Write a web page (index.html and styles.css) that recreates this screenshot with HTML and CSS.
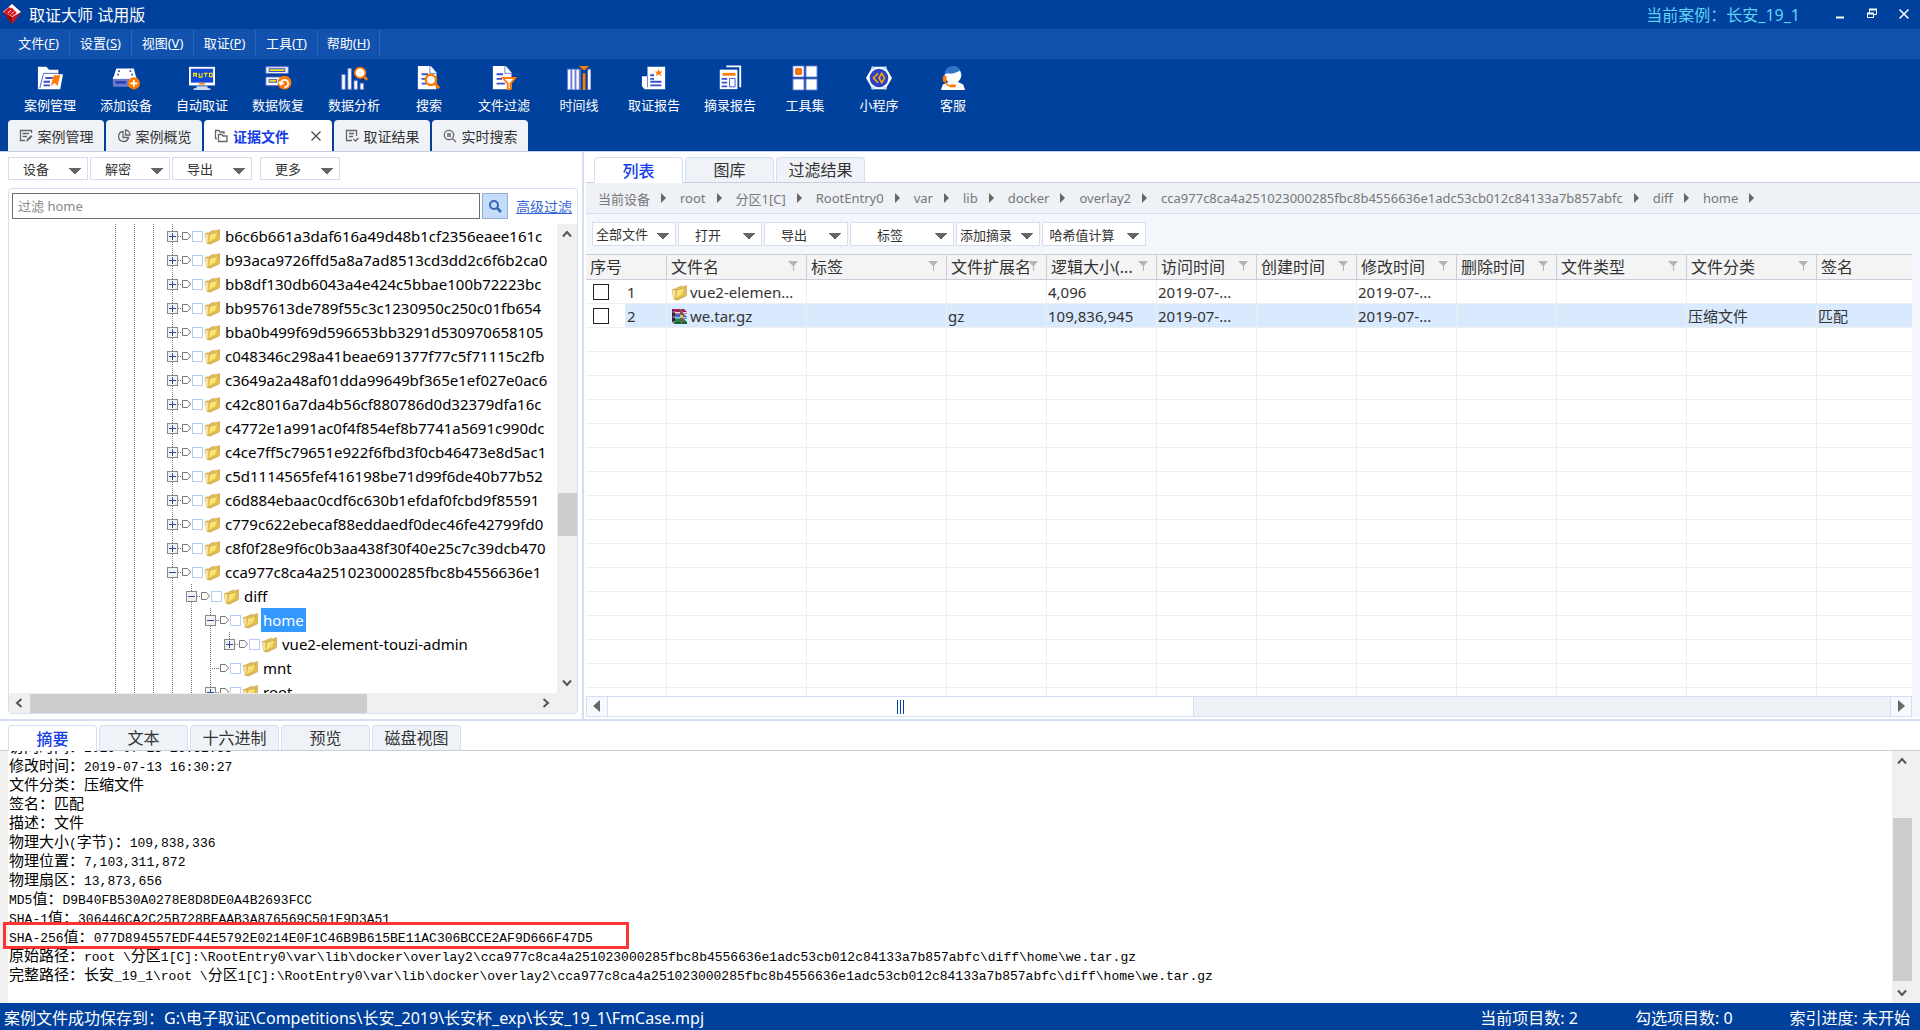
FILE: index.html
```html
<!DOCTYPE html>
<html lang="zh-CN">
<head>
  <meta charset="UTF-8">
  <meta name="viewport" content="width=device-width, initial-scale=1">
  <title>取证大师 试用版</title>
  <link rel="stylesheet" href="styles.css">
</head>
<body>

<!-- Shared icons -->
<svg class="defs" width="0" height="0" aria-hidden="true">
  <linearGradient id="gold" x1="0" y1="0" x2="1" y2="1">
    <stop offset="0" stop-color="#fff6b0"/>
    <stop offset="1" stop-color="#ecc92c"/>
  </linearGradient>
  <symbol id="i-folder" viewBox="0 0 16 16">
    <path d="M1 5.500l3-1 1 1V4l5-2 1 1 3.500-1.500V11L6 15l-3-.5z" fill="#e6c062" stroke="#c39a3a" stroke-width=".7"/>
    <path d="M5.500 6L13 3.500l-1.500 7L4 14z" fill="url(#gold)" stroke="#c9a83a" stroke-width=".7"/>
    <path d="M1 5.500l3 1L4 14l-1.500-.5z" fill="#f7e3a0"/>
  </symbol>
  <symbol id="i-rar" viewBox="0 0 17 17">
    <path d="M1 1h12l3 3v2H4L1 3z" fill="#b3126a"/><path d="M3 4h13v1.500H3z" fill="#f0d8e4"/>
    <path d="M1 6h12l3 3v2H4L1 8z" fill="#4a62c0"/><path d="M3 9h13v1.500H3z" fill="#7fd0e8"/>
    <path d="M1 11h12l3 3v2H4l-3-3z" fill="#188a50"/><path d="M3 14h13v1.500H3z" fill="#0a5030"/>
    <path d="M1 1l3 3v12l-3-2z" fill="#3a2430"/><path d="M1.500 4h3M1.500 9h3M1.500 14h3" stroke="#ddd" stroke-width=".8"/>
    <path d="M8 1h3l1 3v11H9V4z" fill="#7d5a3a"/><path d="M9 7h3v3H9z" fill="#e8c050"/>
  </symbol>
  <symbol id="i-filter" viewBox="0 0 10 12">
    <path d="M0 1h10L6 6v5H5V6z" fill="#b5b5b5"/>
  </symbol>
  <symbol id="i-tag" viewBox="0 0 9 10">
    <path d="M.5 1.500h5l3 3.500-3 3.500h-5z" fill="#fff" stroke="#777"/>
  </symbol>
  <symbol id="i-chev" viewBox="0 0 12 12">
    <path d="M2 8.500L6 4l4 4.500" fill="none" stroke="#555" stroke-width="2"/>
  </symbol>
</svg>

<header>
  <div class="titlebar">
    <svg class="logo" width="18" height="20" viewBox="0 0 18 20">
      <path d="M9 0l9 8-9 12L0 8z" fill="#d8141c"/>
      <path d="M9 0l9 8-9 5-9-5z" fill="#fff"/>
      <path d="M2 8l4-4 6 5.500-3 2zM8 4l5 5M6 6l5 5" fill="#d8141c" stroke="#d8141c" stroke-width="1.500"/>
      <path d="M5 9l3-3M8 10.500l3-3" stroke="#fff" stroke-width="1"/>
      <path d="M9 13v7L0 8z" fill="#8e0c12"/>
    </svg>
    <h1>取证大师 试用版</h1>
    <span class="case-name">当前案例：长安_19_1</span>
    <div class="window-btns">
      <button aria-label="最小化"><svg width="12" height="12"><path d="M2 9.500h8" stroke="#fff" stroke-width="2"/></svg></button>
      <button aria-label="还原"><svg width="12" height="12"><path d="M3.500 5V1.500h7v5H8M1.500 5.500h6v4h-6z" fill="none" stroke="#fff"/><path d="M3 1.500h8M1 5.500h7" stroke="#fff" stroke-width="2"/></svg></button>
      <button aria-label="关闭"><svg width="12" height="12"><path d="M1.500 1.500l9 9M10.500 1.500l-9 9" stroke="#fff" stroke-width="1.500"/></svg></button>
    </div>
  </div>

  <nav class="menubar">
    <button>文件(<u>F</u>)</button>
    <button>设置(<u>S</u>)</button>
    <button>视图(<u>V</u>)</button>
    <button>取证(<u>P</u>)</button>
    <button>工具(<u>T</u>)</button>
    <button>帮助(<u>H</u>)</button>
  </nav>

  <div class="toolbar">
    <button>
      <svg viewBox="0 0 30 28"><path d="M2 26V2h9l3 3h10v5h5l-3 16z" fill="#fff"/><path d="M24 9H8L4 25" fill="none" stroke="#4a5cc0"/><path d="M10 14h8M8 18h7M8 22h7" stroke="#3a4fd0" stroke-width="2"/><path d="M19 11h7l-3 12-3-4-4 4z" fill="#ff7a00"/></svg>
      案例管理
    </button>
    <button>
      <svg viewBox="0 0 32 28"><path d="M5 3h20l3 12H1z" fill="#fff"/><path d="M1 14h27v10H1z" fill="#6a7bd0"/><path d="M1 14h27" stroke="#fff" stroke-width="2"/><path d="M4 19h12" stroke="#2d3fb0" stroke-width="3"/><path d="M7 6h2M20 6h2M6 10h2M22 10h2" stroke="#3a4fd0" stroke-width="2"/><circle cx="25" cy="20" r="7" fill="#ff7a00"/><path d="M21 20h8M25 16v8" stroke="#fff" stroke-width="2"/></svg>
      添加设备
    </button>
    <button>
      <svg viewBox="0 0 30 28"><path d="M1 2h28v20H1z" fill="#fff"/><path d="M3 4h24v15H3z" fill="#1248d8"/><path d="M6 13V9h3v4M6 11h3M12 8.500V13h3V8.500M17 9h4M19 9v4M23 9h3v3.500h-3z" fill="none" stroke="#f4e800" stroke-width="1.200"/><path d="M12 20h6" stroke="#ff7a00" stroke-width="2"/><path d="M9 24h12M6 26h18" stroke="#cfd8f5" stroke-width="2"/></svg>
      自动取证
    </button>
    <button>
      <svg viewBox="0 0 30 28"><path d="M2 2h24v7H2zM2 13h24v9H2z" fill="#fff" stroke="#6a7bd0"/><path d="M5 5.500h18M5 17h9" stroke="#3a4fd0" stroke-width="4"/><path d="M6 5.500h16M6 17h7" stroke="#f4e800" stroke-width="2"/><circle cx="22" cy="19" r="7.500" fill="#ff7a00"/><path d="M18 20a4 4 0 1 1 4 4M16 18l2 3 3-2" fill="none" stroke="#fff" stroke-width="2"/></svg>
      数据恢复
    </button>
    <button>
      <svg viewBox="0 0 32 28"><path d="M2 10h4v17H2zM9 3h4v24H9zM16 17h4v10h-4zM23 20h4v7h-4z" fill="#fff" stroke="#6a7bd0"/><circle cx="23" cy="8" r="6" fill="#fff" stroke="#ff7a00" stroke-width="2"/><path d="M27 12l4 4" stroke="#ff7a00" stroke-width="3"/></svg>
      数据分析
    </button>
    <button class="short">
      <svg viewBox="0 0 26 28"><path d="M1 1h14l6 7v18H1z" fill="#fff"/><path d="M14 1v8h7" fill="none" stroke="#6a7bd0"/><path d="M5 10h7M5 15h5M5 20h5" stroke="#3a4fd0" stroke-width="2"/><circle cx="15" cy="16" r="5.500" fill="#fff" stroke="#ff7a00" stroke-width="2.500"/><path d="M19 20l5 5" stroke="#ff7a00" stroke-width="3"/></svg>
      搜索
    </button>
    <button>
      <svg viewBox="0 0 26 28"><path d="M1 1h14l6 7v18H1z" fill="#fff"/><path d="M14 1v8h7" fill="none" stroke="#6a7bd0"/><path d="M5 10h7M5 15h6M5 20h9" stroke="#3a4fd0" stroke-width="2"/><path d="M12 14h13l-5 6v6h-3v-6z" fill="#fff" stroke="#ff7a00" stroke-width="2"/></svg>
      文件过滤
    </button>
    <button class="short">
      <svg viewBox="0 0 28 28"><path d="M1 4h26v23H1z" fill="#6a7bd0"/><path d="M3.500 5v21M8 5v21M12.500 5v21M25 5v21" stroke="#fff" stroke-width="2.500"/><path d="M16 3h7v25h-7z" fill="#00419d"/><path d="M14 1h11l-5.500 5zM18 9h3v18h-3z" fill="#ff7a00"/></svg>
      时间线
    </button>
    <button>
      <svg viewBox="0 0 28 28"><path d="M7 2h19v24H4l-3-3V12h6z" fill="#fff"/><path d="M7 12v12" stroke="#6a7bd0"/><path d="M10 11h4M10 15h4M10 18h12M10 22h12" stroke="#3a4fd0" stroke-width="2"/><path d="M19 4l1 3h3l-2 2 1 3-3-2-3 2 1-3-2-2h3z" fill="#ff7a00"/></svg>
      取证报告
    </button>
    <button>
      <svg viewBox="0 0 28 28"><path d="M3 5h19v21H3z" fill="#fff"/><path d="M10 1.500h15V24" fill="none" stroke="#fff" stroke-width="2"/><path d="M6 10h14" stroke="#ff7a00" stroke-width="3"/><path d="M5 15h6M5 19h6M5 23h6" stroke="#3a4fd0" stroke-width="2"/><path d="M13.500 14.500h6v9h-6z" fill="#fff" stroke="#3a4fd0"/></svg>
      摘录报告
    </button>
    <button class="short">
      <svg viewBox="0 0 28 28"><path d="M1 1h12v12H1zM15 1h12v12H15zM1 15h12v12H1zM15 15h12v12H15z" fill="#fff" stroke="#5b70cc"/><path d="M4 4h6v6H4z" fill="#ff7a00" stroke="#e04a00"/></svg>
      工具集
    </button>
    <button class="short">
      <svg viewBox="0 0 28 28"><path d="M7 2h14l7 12-7 12H7L0 14z" fill="#fff"/><circle cx="14" cy="14" r="10" fill="#2b3fc8"/><path d="M13 9l-5 5 5 5M17 9l3 5-3 5-3-5z" fill="none" stroke="#f2a900" stroke-width="1.800"/><path d="M6 2l3 2M22 2l-3 2M6 26l3-2M22 26l-3-2" stroke="#9be0f5" stroke-width="2"/></svg>
      小程序
    </button>
    <button class="short">
      <svg viewBox="0 0 28 28"><path d="M1 27l2-6 7-3h9l6 3 2 6z" fill="#fff"/><circle cx="14" cy="11" r="9" fill="#fff"/><path d="M5 10a9 9 0 0 1 17-4c-5 3-10 4-14 3z" fill="#3274c8"/><path d="M3 12h4v6H3z" fill="#ff7a00"/><path d="M5 17c2 5 5 6 8 6" fill="none" stroke="#ff7a00" stroke-width="1.500"/><path d="M11 21h6v3h-6z" fill="#ff7a00"/></svg>
      客服
    </button>
  </div>

  <div class="main-tabs">
    <button><svg viewBox="0 0 14 14"><path d="M12.500 4V1.500h-11v10H6M3.500 4.500H10M3.500 7.500H8" fill="none" stroke="#666" stroke-width="1.300"/><path d="M7 13l1-3 4-4 1.500 1.500-4 4z" fill="#666"/></svg>案例管理</button>
    <button><svg viewBox="0 0 14 14"><path d="M6 2.500a5 5 0 1 0 5.500 6H6zM8.500 1v5H13a5 5 0 0 0-4.500-5z" fill="none" stroke="#666" stroke-width="1.300"/></svg>案例概览</button>
    <button class="active"><svg viewBox="0 0 14 14"><path d="M3 9.500H1.500v-8H5l1 1.500h4V5M4.500 12.500v-7H8L9 7h4v5.500z" fill="none" stroke="#666" stroke-width="1.300"/></svg>证据文件<svg class="close" viewBox="0 0 12 12"><path d="M1.500 1.500l9 9M10.500 1.500l-9 9" stroke="#444" stroke-width="1.200"/></svg></button>
    <button><svg viewBox="0 0 14 14"><path d="M11.500 7V1.500h-10v10H7M4 4.500h5M4 7.500h4M8.500 10l2 2 3-3" fill="none" stroke="#666" stroke-width="1.300"/></svg>取证结果</button>
    <button><svg viewBox="0 0 14 14"><circle cx="6" cy="6" r="4.700" fill="none" stroke="#666" stroke-width="1.300"/><path d="M4 5h4M4 7h4M9.500 9.500L13 13" stroke="#666" stroke-width="1.300"/></svg>实时搜索</button>
  </div>
</header>

<main>
  <section class="left">
    <div class="btn-row">
      <button class="drop">设备</button>
      <button class="drop">解密</button>
      <button class="drop">导出</button>
      <button class="drop more">更多</button>
    </div>
    <div class="tree-panel">
      <div class="search">
        <input type="text" placeholder="过滤 home" aria-label="过滤">
        <button aria-label="搜索"><svg width="14" height="14"><circle cx="6" cy="6" r="4" fill="none" stroke="#3a66b0" stroke-width="2"/><path d="M9 9l4 4" stroke="#3a66b0" stroke-width="2.500"/></svg></button>
        <a href="#">高级过滤</a>
      </div>
      <div class="tree-area">
        <div class="tree" id="tree"></div>
        <div class="vscroll">
          <svg width="12" height="12"><use href="#i-chev"/></svg>
          <div class="thumb"></div>
          <svg class="down" width="12" height="12"><use href="#i-chev"/></svg>
        </div>
      </div>
      <div class="hscroll">
        <svg class="to-left" width="12" height="12"><use href="#i-chev"/></svg>
        <div class="thumb"></div>
        <svg class="to-right" width="12" height="12"><use href="#i-chev"/></svg>
      </div>
    </div>
  </section>

  <section class="right">
    <div class="sub-tabs">
      <button class="active">列表</button>
      <button>图库</button>
      <button>过滤结果</button>
    </div>
    <nav class="crumbs" id="crumbs"></nav>
    <div class="list-tools">
      <select aria-label="文件范围"><option>全部文件</option></select>
      <button class="drop">打开</button>
      <button class="drop">导出</button>
      <button class="drop wide">标签</button>
      <button class="drop tight">添加摘录</button>
      <button class="drop wide tight">哈希值计算</button>
    </div>
    <div class="table-wrap">
      <table>
        <colgroup>
          <col class="c80"><col class="c140"><col class="c140"><col class="c100"><col class="c110">
          <col class="c100"><col class="c100"><col class="c100"><col class="c100"><col class="c130"><col class="c130"><col>
        </colgroup>
        <thead><tr id="headRow"></tr></thead>
        <tbody id="fileRows"></tbody>
      </table>
    </div>
    <div class="list-scroll">
      <button aria-label="向左"><svg width="8" height="12"><path d="M7 0v12L0 6z" fill="#666"/></svg></button>
      <div class="list-track"><div class="list-thumb"><i></i><i></i><i></i></div></div>
      <button aria-label="向右"><svg width="8" height="12"><path d="M1 0v12l7-6z" fill="#666"/></svg></button>
    </div>
  </section>
</main>

<section class="detail">
  <div class="sub-tabs">
    <button class="active">摘要</button>
    <button>文本</button>
    <button>十六进制</button>
    <button>预览</button>
    <button>磁盘视图</button>
  </div>
  <div class="detail-body">
    <div class="summary" id="summary"></div>
    <div class="vscroll">
      <svg width="12" height="12"><use href="#i-chev"/></svg>
      <div class="thumb"></div>
      <svg class="down" width="12" height="12"><use href="#i-chev"/></svg>
    </div>
  </div>
</section>

<footer>
  <span class="saved">案例文件成功保存到：G:\电子取证\Competitions\长安_2019\长安杯_exp\长安_19_1\FmCase.mpj</span>
  <span>当前项目数: 2</span>
  <span>勾选项目数: 0</span>
  <span>索引进度: 未开始</span>
</footer>

<script>
  // name, depth, toggle sign ('' = leaf), last child
  const nodes = [
    ['b6c6b661a3daf616a49d48b1cf2356eaee161c', 0, '+'],
    ['b93aca9726ffd5a8a7ad8513cd3dd2c6f6b2ca0', 0, '+'],
    ['bb8df130db6043a4e424c5bbae100b72223bc', 0, '+'],
    ['bb957613de789f55c3c1230950c250c01fb654', 0, '+'],
    ['bba0b499f69d596653bb3291d530970658105', 0, '+'],
    ['c048346c298a41beae691377f77c5f71115c2fb', 0, '+'],
    ['c3649a2a48af01dda99649bf365e1ef027e0ac6', 0, '+'],
    ['c42c8016a7da4b56cf880786d0d32379dfa16c', 0, '+'],
    ['c4772e1a991ac0f4f854ef8b7741a5691c990dc', 0, '+'],
    ['c4ce7ff5c79651e922f6fbd3f0cb46473e8d5ac1', 0, '+'],
    ['c5d1114565fef416198be71d99f6de40b77b52', 0, '+'],
    ['c6d884ebaac0cdf6c630b1efdaf0fcbd9f85591', 0, '+'],
    ['c779c622ebecaf88eddaedf0dec46fe42799fd0', 0, '+'],
    ['c8f0f28e9f6c0b3aa438f30f40e25c7c39dcb470', 0, '+'],
    ['cca977c8ca4a251023000285fbc8b4556636e1', 0, '-'],
    ['diff', 1, '-'],
    ['home', 2, '-'],
    ['vue2-element-touzi-admin', 3, '+', true],
    ['mnt', 2, ''],
    ['root', 2, '+']
  ];

  document.getElementById('tree').innerHTML = nodes.map(([name, depth, sign, last]) => `
    <div class="node">
      ${'<span class="guide"></span>'.repeat(3 + depth)}
      <span class="guide joint ${last ? 'last' : ''}">${sign ? `<i class="${sign === '+' ? 'plus' : 'minus'}"></i>` : ''}</span>
      <svg class="tag" width="9" height="10"><use href="#i-tag"/></svg>
      <input type="checkbox" aria-label="${name}">
      <svg class="folder" width="17" height="17"><use href="#i-folder"/></svg>
      <span class="name ${name === 'home' ? 'selected' : ''}">${name}</span>
    </div>`).join('');

  const path = ['当前设备', 'root', '分区1[C]', 'RootEntry0', 'var', 'lib', 'docker', 'overlay2',
    'cca977c8ca4a251023000285fbc8b4556636e1adc53cb012c84133a7b857abfc', 'diff', 'home'];
  document.getElementById('crumbs').innerHTML = path.map(p => `<a href="#">${p}</a>`).join('');

  const heads = ['序号', '文件名', '标签', '文件扩展名', '逻辑大小(...', '访问时间', '创建时间',
    '修改时间', '删除时间', '文件类型', '文件分类', '签名'];
  document.getElementById('headRow').innerHTML = heads.map((h, i) => `
    <th>${h}${i > 0 && i < 11 ? '<svg width="10" height="12"><use href="#i-filter"/></svg>' : ''}</th>`).join('');

  const files = [
    ['folder', 'vue2-elemen...', '', '', '4,096', '2019-07-...', '', '2019-07-...', '', '', '', ''],
    ['rar', 'we.tar.gz', '', 'gz', '109,836,945', '2019-07-...', '', '2019-07-...', '', '', '压缩文件', '匹配']
  ];
  let rows = files.map(([icon, name, ...rest], i) => `
    <tr class="${i === 1 ? 'current' : ''}">
      <td class="num"><label><input type="checkbox"><span>${i + 1}</span></label></td>
      <td><svg width="17" height="17"><use href="#i-${icon}"/></svg>${name}</td>
      ${rest.map(c => `<td>${c}</td>`).join('')}
    </tr>`).join('');
  // empty rows fill the rest of the grid
  rows += `<tr>${'<td></td>'.repeat(12)}</tr>`.repeat(16);
  document.getElementById('fileRows').innerHTML = rows;

  const summary = [
    '访问时间：2019-07-13 16:32:53',
    '修改时间：2019-07-13 16:30:27',
    '文件分类：压缩文件',
    '签名：匹配',
    '描述：文件',
    '物理大小(字节)：109,838,336',
    '物理位置：7,103,311,872',
    '物理扇区：13,873,656',
    'MD5值：D9B40FB530A0278E8D8DE0A4B2693FCC',
    'SHA-1值：306446CA2C25B728BEAAB3A876569C501E9D3A51',
    'SHA-256值：077D894557EDF44E5792E0214E0F1C46B9B615BE11AC306BCCE2AF9D666F47D5',
    '原始路径：root \\分区1[C]:\\RootEntry0\\var\\lib\\docker\\overlay2\\cca977c8ca4a251023000285fbc8b4556636e1adc53cb012c84133a7b857abfc\\diff\\home\\we.tar.gz',
    '完整路径：长安_19_1\\root \\分区1[C]:\\RootEntry0\\var\\lib\\docker\\overlay2\\cca977c8ca4a251023000285fbc8b4556636e1adc53cb012c84133a7b857abfc\\diff\\home\\we.tar.gz'
  ];
  document.getElementById('summary').innerHTML = summary.map(line => {
    const html = line.replace(/[\u4e00-\u9fff：]+/g, '<b>$&</b>');
    return `<p class="${line.startsWith('SHA-256') ? 'marked' : ''}">${html}</p>`;
  }).join('');
</script>

</body>
</html>
```
FILE: styles.css
```css
*, *::before, *::after {
  margin: 0;
  padding: 0;
  box-sizing: border-box;
}

body {
  display: flex;
  flex-direction: column;
  height: 100vh;
  overflow: hidden;
  font-family: 'Noto Sans', 'Noto Sans CJK SC', sans-serif;
  font-size: 13px;
  color: #333;
  background-color: white;
}

button, input, select {
  font: inherit;
  color: inherit;
}

button {
  border: none;
  background: none;
  white-space: nowrap;
}

.defs {
  position: absolute;
}

/* Header */
header {
  background-color: #00419d;
  color: white;
  border-bottom: 1px solid #c5cde0;
}

.titlebar {
  display: flex;
  align-items: center;
  height: 29px;
  padding: 0 10px 2px 3px;
}

.titlebar h1 {
  font-size: 16px;
  font-weight: 400;
  margin-left: 8px;
}

.case-name {
  margin-left: auto;
  font-size: 16px;
  color: #5fd3f7;
}

.window-btns {
  display: flex;
  gap: 20px;
  margin-left: 34px;
}

.window-btns button {
  width: 12px;
  height: 12px;
}

.window-btns svg {
  display: block;
}

.menubar {
  display: flex;
  height: 30px;
  padding: 1px 0 3px 8px;
  background-color: #1152ae;
}

.menubar button {
  width: 62px;
  padding-bottom: 2px;
  border-right: 1px solid #2a66ba;
}

.toolbar {
  display: flex;
  height: 61px;
  padding: 6px 0 0 12px;
}

.toolbar button {
  display: flex;
  flex-direction: column;
  align-items: center;
  width: 76px;
  line-height: 20px;
}

.toolbar .short {
  width: 74px;
}

.toolbar svg {
  width: 28px;
  height: 26px;
  margin-bottom: 4px;
}

.main-tabs {
  display: flex;
  gap: 2px;
  padding-left: 8px;
}

.main-tabs button {
  display: flex;
  align-items: center;
  justify-content: center;
  gap: 5px;
  width: 96px;
  height: 31px;
  font-size: 14px;
  color: #333;
  background-color: #eff2f7;
  border-radius: 4px 4px 0 0;
}

.main-tabs svg {
  width: 14px;
  height: 14px;
}

.main-tabs .active {
  width: 128px;
  background-color: white;
  color: #1540e8;
  font-weight: 700;
}

.main-tabs .close {
  width: 12px;
  height: 12px;
  margin-left: 16px;
}

/* Drop-down buttons */
.drop, .list-tools select {
  width: 80px;
  height: 23px;
  padding-right: 24px;
  border: 1px solid #d5ddef;
  background: linear-gradient(to bottom left, #666 50%, transparent 51%) right 12px top 10px / 6px 6px no-repeat,
    linear-gradient(to bottom right, #666 50%, transparent 51%) right 6px top 10px / 6px 6px no-repeat, white;
}

/* Left panel */
main {
  display: flex;
  height: 569px;
  flex-shrink: 0;
  border-bottom: 2px solid #d5dff2;
}

.left {
  display: flex;
  flex-direction: column;
  width: 584px;
  padding: 5px 4px 5px 8px;
  border-right: 2px solid #d5dff2;
}

.btn-row {
  display: flex;
  gap: 2px;
}

.more {
  margin-left: 6px;
}

.tree-panel {
  display: flex;
  flex-direction: column;
  flex: 1;
  min-height: 0;
  margin-top: 8px;
  border: 1px solid #d5dff2;
  border-radius: 4px;
}

.search {
  display: flex;
  align-items: center;
  gap: 2px;
  padding: 4px 3px 5px;
}

.search input {
  flex: 1;
  height: 26px;
  padding-left: 5px;
  border: 1px solid #707070;
}

.search input::placeholder {
  color: #888;
}

.search button {
  width: 26px;
  height: 26px;
  border: 1px solid #8fb0dc;
  background-color: #c5dcfb;
}

.search svg {
  display: block;
  margin: 0 auto;
}

.search a {
  margin: 0 2px 0 6px;
  font-size: 14px;
  color: #3566d6;
}

.tree-area {
  display: flex;
  flex: 1;
  min-height: 0;
}

.tree {
  flex: 1;
  overflow: hidden;
}

.node {
  display: flex;
  align-items: center;
  height: 24px;
  padding-left: 97px;
  font-size: 15px;
  color: #000;
  white-space: nowrap;
}

.guide {
  display: flex;
  align-items: center;
  justify-content: center;
  flex-shrink: 0;
  width: 19px;
  height: 24px;
  background: repeating-linear-gradient(#777 0 1px, transparent 1px 2px) 9px 0 / 1px 100% no-repeat;
}

/* dotted arm that runs from the trunk to the tag */
.joint {
  background: repeating-linear-gradient(#777 0 1px, transparent 1px 2px) 9px 0 / 1px 100% no-repeat,
    repeating-linear-gradient(to right, #777 0 1px, transparent 1px 2px) 9px 12px / 10px 1px no-repeat;
}

.joint.last {
  background-size: 1px 12px, 10px 1px;
}

.plus, .minus {
  width: 11px;
  height: 11px;
  border: 1px solid #888;
  background: linear-gradient(#2b4a9a, #2b4a9a) center / 7px 1px no-repeat, #f2f2f2;
}

.plus {
  background: linear-gradient(#2b4a9a, #2b4a9a) center / 7px 1px no-repeat,
    linear-gradient(#2b4a9a, #2b4a9a) center / 1px 7px no-repeat, #f2f2f2;
}

.tag, .folder {
  flex-shrink: 0;
}

.node input {
  appearance: none;
  flex-shrink: 0;
  width: 11px;
  height: 11px;
  margin: 0 1px;
  border: 1px solid #b5cdf8;
  background-color: white;
}

.name {
  height: 24px;
  line-height: 24px;
  padding: 0 2px;
  margin-left: 2px;
}

.name.selected {
  background-color: #3399ff;
  color: white;
}

/* Scroll bars */
.vscroll {
  display: flex;
  flex-direction: column;
  align-items: center;
  width: 20px;
  padding: 4px 0;
  background-color: #f0f0f0;
}

.vscroll .thumb {
  width: 19px;
  height: 43px;
  margin-top: auto;
  margin-bottom: 141px;
  background-color: #cdcdcd;
}

.down {
  transform: rotate(180deg);
}

.hscroll {
  display: flex;
  align-items: center;
  height: 20px;
  padding: 0 25px 0 4px;
  background-color: #f0f0f0;
}

.hscroll .thumb {
  width: 337px;
  height: 19px;
  margin: 0 auto 0 5px;
  background-color: #cdcdcd;
}

.to-left {
  transform: rotate(-90deg);
}

.to-right {
  transform: rotate(90deg);
}

/* Tabs above the list and the summary */
.sub-tabs {
  display: flex;
  gap: 2px;
  padding: 5px 0 0 8px;
  background-color: white;
  border-bottom: 1px solid #ccccdb;
}

.sub-tabs button {
  width: 89px;
  height: 25px;
  font-size: 16px;
  line-height: 22px;
  border: 1px solid #d5dff2;
  border-bottom: none;
  border-radius: 4px 4px 0 0;
  background-color: #eff2f7;
}

.sub-tabs .active {
  margin-bottom: -1px;
  height: 26px;
  background-color: white;
  color: #1540e8;
  font-weight: 500;
}

/* Right panel */
.right {
  display: flex;
  flex-direction: column;
  flex: 1;
  min-width: 0;
  padding-left: 2px;
  background: linear-gradient(#f3f6fb, #f3f6fb) 2px 0 / 100% 565px no-repeat;
}

.crumbs {
  display: flex;
  align-items: center;
  height: 31px;
  padding-left: 12px;
  background-color: #eef1f6;
  border-bottom: 1px solid #d5dff2;
}

.crumbs a {
  display: flex;
  align-items: center;
  color: #777;
  text-decoration: none;
}

.crumbs a::after {
  content: '';
  margin: 0 14px 0 11px;
  border: 5px solid transparent;
  border-left-color: #666;
  border-right: none;
}

.list-tools {
  display: flex;
  gap: 2px;
  padding: 8px 6px;
}

.list-tools select, .list-tools .drop {
  width: 84px;
  height: 24px;
}

.list-tools select {
  appearance: none;
  padding: 0 0 0 3px;
}

.list-tools .wide {
  width: 104px;
}

.table-wrap {
  flex: 1;
  overflow: hidden;
  margin-right: 8px;
  background-color: white;
}

table {
  width: 100%;
  table-layout: fixed;
  border-collapse: separate;
  border-spacing: 0;
}

.c80 { width: 81px; }
.c100 { width: 100px; }
.c110 { width: 110px; }
.c130 { width: 130px; }
.c140 { width: 140px; }

th {
  height: 26px;
  padding-left: 4px;
  font-size: 16px;
  font-weight: 400;
  line-height: 22px;
  text-align: left;
  white-space: nowrap;
  background-color: #f4f4f4;
  border: 1px solid #ccccdb;
  border-left: none;
}

th:last-child, td:last-child {
  border-right: none;
}

th svg {
  float: right;
  margin: 4px 8px 0 -8px;
}

td {
  height: 24px;
  padding-left: 1px;
  font-size: 15px;
  line-height: 22px;
  white-space: nowrap;
  border-right: 1px solid #eee;
  border-bottom: 1px solid #eee;
}

td svg {
  margin: 0 2px 0 3px;
  vertical-align: -3px;
}

.current td {
  background-color: #d9eaff;
}

.current .num {
  background: linear-gradient(to right, white 39px, #d9eaff 39px);
}

.num label {
  display: flex;
  align-items: center;
  padding-left: 6px;
}

.num input {
  appearance: none;
  width: 16px;
  height: 16px;
  margin-right: 18px;
  border: 1px solid #222;
  background-color: white;
}

.list-scroll {
  display: flex;
  height: 21px;
  margin: 0 8px 2px 0;
  background-color: #eef1f6;
  border: 1px solid #d5dff2;
}

.list-scroll button {
  width: 20px;
  background-color: #f7f9fc;
}

.list-track {
  flex: 1;
  border: solid #d5dff2;
  border-width: 0 1px;
}

.list-thumb {
  display: flex;
  align-items: center;
  justify-content: center;
  gap: 2px;
  width: 586px;
  height: 100%;
  background-color: white;
  border-right: 1px solid #d5dff2;
}

.list-thumb i {
  width: 1px;
  height: 14px;
  background-color: #00419d;
}

/* Summary */
.detail {
  display: flex;
  flex-direction: column;
  flex: 1;
  min-height: 0;
}

.detail .sub-tabs {
  padding-top: 4px;
}

.detail-body {
  display: flex;
  flex: 1;
  min-height: 0;
  padding: 0 8px;
  background-color: #f0f0f0;
}

.summary {
  display: flex;
  flex-direction: column;
  justify-content: flex-end;
  flex: 1;
  min-width: 0;
  padding: 0 0 20px 1px;
  background-color: white;
  clip-path: inset(0 0 0 -8px);
}

.summary p {
  position: relative;
  height: 19px;
  font: 13px/19px 'Liberation Mono', 'Noto Sans CJK SC', monospace;
  color: #000;
  white-space: pre;
}

.summary b {
  font: 15px/19px 'Noto Sans CJK SC', sans-serif;
}

/* red frame round the hash */
.marked::after {
  content: '';
  position: absolute;
  left: -6px;
  top: -4px;
  width: 626px;
  height: 27px;
  border: 3px solid #fb3434;
}

.detail .vscroll .thumb {
  height: 163px;
  margin-bottom: 6px;
}

footer {
  display: flex;
  align-items: center;
  gap: 57px;
  height: 27px;
  padding: 0 10px 0 4px;
  font-size: 16px;
  color: white;
  background-color: #00419d;
}

.saved {
  margin-right: auto;
}
```
